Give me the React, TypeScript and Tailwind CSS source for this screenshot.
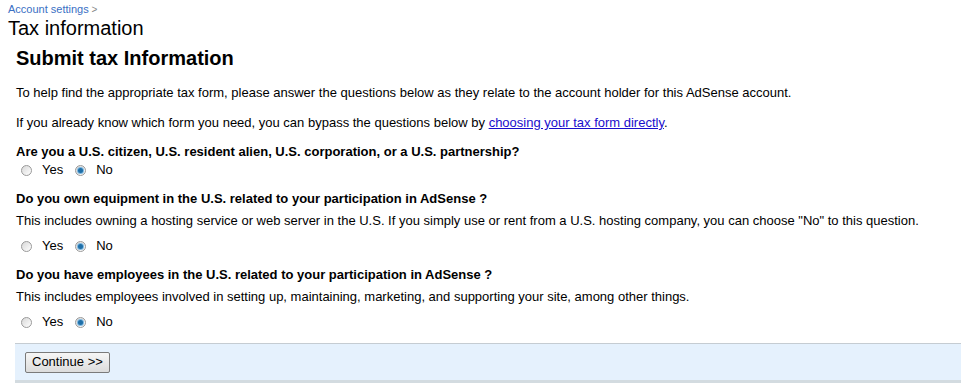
import React, { useState } from 'react';

type Answer = 'yes' | 'no';

function Radio({ checked }: { checked: boolean }) {
  return (
    <span className="relative inline-block w-[11px] h-[11px] rounded-full border border-[#9a9a9a] bg-gradient-to-br from-[#d8d8d8] to-[#ffffff] shrink-0">
      {checked && (
        <span className="absolute left-[2px] top-[2px] w-[5px] h-[5px] rounded-full bg-[#1f6fa8] ring-1 ring-[#7fb8e0]" />
      )}
    </span>
  );
}

function YesNo({ value, onChange }: { value: Answer; onChange: (v: Answer) => void }) {
  return (
    <div className="flex items-center h-[16px] pl-[21px]">
      <label className="flex items-center cursor-pointer" onClick={() => onChange('yes')}>
        <Radio checked={value === 'yes'} />
        <span className="ml-[10px]">Yes</span>
      </label>
      <label className="flex items-center cursor-pointer ml-[12px]" onClick={() => onChange('no')}>
        <Radio checked={value === 'no'} />
        <span className="ml-[10px]">No</span>
      </label>
    </div>
  );
}

export default function App() {
  const [citizen, setCitizen] = useState<Answer>('no');
  const [equipment, setEquipment] = useState<Answer>('no');
  const [employees, setEmployees] = useState<Answer>('no');

  return (
    <div className="w-[961px] h-[390px] bg-white text-black font-['Liberation_Sans',Arial,sans-serif] text-[13px] leading-[16px] overflow-hidden">
      <div className="pl-[8px] pt-[2px]">
        <div className="h-[14px] leading-[14px] text-[11px]">
          <a href="#" className="text-[#3a6fc4]">Account settings</a>
          <span className="text-[#888] text-[10px]"> &gt;</span>
        </div>
        <h1 className="h-[24px] leading-[24px] text-[20px] font-normal">Tax information</h1>
      </div>

      <div className="pl-[16px]">
        <h2 className="mt-[6px] h-[24px] leading-[24px] text-[20px] font-bold">Submit tax Information</h2>

        <p className="mt-[15px]">
          To help find the appropriate tax form, please answer the questions below as they relate to the account holder for this AdSense account.
        </p>
        <p className="mt-[14px]">
          If you already know which form you need, you can bypass the questions below by{' '}
          <a href="#" className="text-[#1a0dcc] underline">choosing your tax form directly</a>.
        </p>

        <div className="mt-[13px] font-bold">
          Are you a U.S. citizen, U.S. resident alien, U.S. corporation, or a U.S. partnership?
        </div>
        <div className="mt-[2px] -ml-[16px]">
          <YesNo value={citizen} onChange={setCitizen} />
        </div>

        <div className="mt-[13px] font-bold">Do you own equipment in the U.S. related to your participation in AdSense ?</div>
        <div className="mt-[6px]">
          This includes owning a hosting service or web server in the U.S. If you simply use or rent from a U.S. hosting company, you can choose "No" to this question.
        </div>
        <div className="mt-[9px] -ml-[16px]">
          <YesNo value={equipment} onChange={setEquipment} />
        </div>

        <div className="mt-[13px] font-bold">Do you have employees in the U.S. related to your participation in AdSense ?</div>
        <div className="mt-[6px]">
          This includes employees involved in setting up, maintaining, marketing, and supporting your site, among other things.
        </div>
        <div className="mt-[9px] -ml-[16px]">
          <YesNo value={employees} onChange={setEmployees} />
        </div>
      </div>

      <div className="ml-[15px] mt-[13px] h-[40px] bg-[#e5f1fd] border-t border-[#c5ccd2] border-b-[3px] border-b-[#d3dbe0] flex items-center pl-[10px]">
        <button className="h-[21px] px-[6px] text-[13px] leading-[16px] border border-[#7a7a7a] rounded-[2px] bg-gradient-to-b from-[#f6f6f6] to-[#dcdcdc] text-black">
          Continue &gt;&gt;
        </button>
      </div>
    </div>
  );
}
